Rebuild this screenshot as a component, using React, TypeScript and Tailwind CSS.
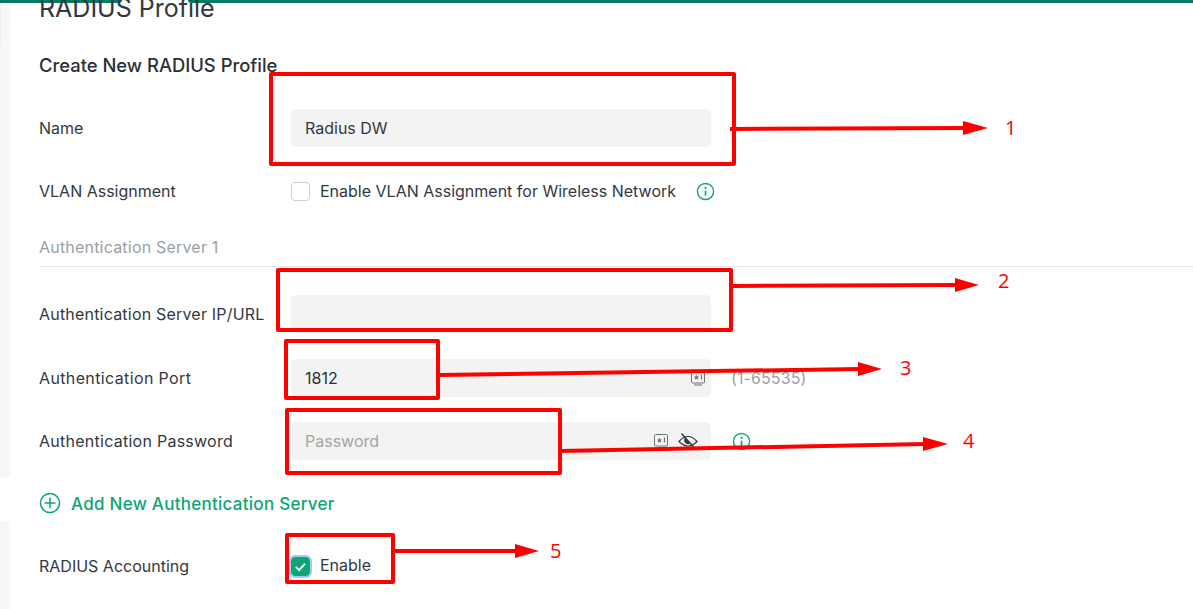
import React from 'react'

function InfoIcon({ className }: { className?: string }) {
  return (
    <svg viewBox="0 0 20 20" fill="none" stroke="currentColor" className={className}>
      <circle cx="10" cy="10" r="8.5" strokeWidth="1.5" />
      <path d="M10 9v5.5" strokeWidth="1.8" />
      <circle cx="10" cy="6.2" r="1.1" fill="currentColor" stroke="none" />
    </svg>
  )
}

function KeyboardIcon({ className }: { className?: string }) {
  return (
    <svg viewBox="0 0 16 16" fill="none" stroke="currentColor" className={className}>
      <path d="M1.500 12V2.500a1 1 0 0 1 1-1h11a1 1 0 0 1 1 1V12a1 1 0 0 1-1 1H2.500a1 1 0 0 1-1-1z" strokeWidth="1" />
      <path d="M4 15h8" strokeWidth="1" />
      <path d="M6.500 4.500l.8 1.900 2 .1-1.500 1.300.5 2-1.800-1.100-1.800 1.100.5-2L3.700 6.500l2-.1z" fill="currentColor" stroke="none" />
      <path d="M11.500 4.500v5" strokeWidth="1.200" />
    </svg>
  )
}

function EyeOffIcon({ className }: { className?: string }) {
  return (
    <svg viewBox="0 0 20 20" fill="none" stroke="currentColor" className={className}>
      <path d="M1 10.500C4 7 7 5.500 10 5.500s6 1.500 9 5c-3 3-6 4.500-9 4.500s-6-1.500-9-4.500z" strokeWidth="1.200" />
      <path d="M7 7c-.8 1-1 2-.8 3 .3 1.500 1.800 3 3.300 3.200 1 .1 2-.2 2.800-.8z" fill="currentColor" stroke="none" />
      <path d="M3.500 2.500l13 14.500" strokeWidth="1.400" />
    </svg>
  )
}

function Row({ label, labelClass, children }: { label: string; labelClass?: string; children: React.ReactNode }) {
  return (
    <div className="flex h-[38px] items-center">
      <div className={`w-[252px] shrink-0 text-[#33383f] ${labelClass ?? ''}`}>{label}</div>
      {children}
    </div>
  )
}

function Field({ children }: { children?: React.ReactNode }) {
  return <div className="flex h-[38px] w-[420px] items-center rounded-[5px] bg-[#f3f3f3] pl-[14px] pr-[13px]">{children}</div>
}

const redBoxes = [
  'left-[269px] top-[72px] h-[94px] w-[467px]',
  'left-[276px] top-[268px] h-[64px] w-[457px]',
  'left-[284px] top-[339px] h-[61px] w-[156px]',
  'left-[285px] top-[408px] h-[67px] w-[277px]',
  'left-[285px] top-[533px] h-[51px] w-[110px]',
]

const numbers = [
  { text: '1', cls: 'left-[1005px] top-[113px]' },
  { text: '2', cls: 'left-[998px] top-[266px]' },
  { text: '3', cls: 'left-[900px] top-[353px]' },
  { text: '4', cls: 'left-[963px] top-[426px]' },
  { text: '5', cls: 'left-[550px] top-[536px]' },
]

export default function App() {
  return (
    <div className="relative h-[609px] w-[1193px] overflow-hidden bg-white font-['Inter',sans-serif] text-[16px]">
      {/* top bar, with the gap of a tab sitting in it */}
      <div className="flex h-[3px]">
        <div className="w-[122px] rounded-br-[3px] bg-[#047a62]" />
        <div className="w-[66px]" />
        <div className="flex-1 rounded-bl-[3px] bg-[#047a62]" />
      </div>

      <div className="flex h-[606px]">
        {/* left edge strip */}
        <div className="flex w-[10px] shrink-0 flex-col">
          <div className="h-[474px] bg-[#f7f7f7]">
            <div className="h-[42px] w-px bg-[#ececec]" />
          </div>
          <div className="mt-[44px] flex-1 bg-[#f7f7f7]" />
        </div>

        <div className="flex-1 pl-[29px]">
          <h1 className="-mt-[10px] h-[30px] text-[25px] leading-[30px] text-[#33383f]">RADIUS Profile</h1>
          <h2 className="mt-[30px] h-[24px] text-[18.400px] leading-[24px] font-[450] text-[#2b3036]">Create New RADIUS Profile</h2>

          <div className="mt-[32px]">
            <Row label="Name">
              <Field>
                <span className="text-[#33383f]">Radius DW</span>
              </Field>
            </Row>
          </div>

          <div className="mt-[25px]">
            <Row label="VLAN Assignment">
              <div className="h-[19px] w-[19px] rounded-[4px] border border-[#cfcfcf] bg-white" />
              <span className="ml-[10px] text-[#33383f]">Enable VLAN Assignment for Wireless Network</span>
              <InfoIcon className="ml-[20px] h-[19px] w-[19px] text-[#10a874]" />
            </Row>
          </div>

          <div className="mt-[25px] h-[32px] border-b border-[#e8e8e8] leading-[24px] tracking-[0.2px] text-[#9a9fa5]">
            Authentication Server 1
          </div>

          <div className="mt-[28px]">
            <Row label="Authentication Server IP/URL" labelClass="tracking-[0.2px]">
              <Field />
            </Row>
          </div>

          <div className="mt-[26px]">
            <Row label="Authentication Port" labelClass="tracking-[0.37px]">
              <Field>
                <span className="flex-1 text-[#2b3036]">1812</span>
                <KeyboardIcon className="-mr-[8px] h-[16px] w-[16px] text-[#6f7378]" />
              </Field>
              <span className="ml-[20px] tracking-[0.1px] text-[#9a9fa5]">(1-65535)</span>
            </Row>
          </div>

          <div className="mt-[25px]">
            <Row label="Authentication Password" labelClass="tracking-[0.26px]">
              <Field>
                <span className="flex-1 text-[#a3a3a3]">Password</span>
                <KeyboardIcon className="h-[16px] w-[16px] text-[#6f7378]" />
                <EyeOffIcon className="ml-[9px] h-[20px] w-[20px] text-[#33383f]" />
              </Field>
              <InfoIcon className="ml-[21px] h-[19px] w-[19px] text-[#10a874]" />
            </Row>
          </div>

          <div className="mt-[32px] flex h-[22px] items-center text-[#0ea574]">
            <svg viewBox="0 0 22 22" fill="none" stroke="currentColor" strokeWidth="1.500" className="h-[22px] w-[22px]">
              <circle cx="11" cy="11" r="9.500" />
              <path d="M11 5.500v11M5.500 11h11" />
            </svg>
            <span className="ml-[10px] pt-[3px] text-[17px] font-medium tracking-[0.27px]">Add New Authentication Server</span>
          </div>

          <div className="mt-[33px]">
            <Row label="RADIUS Accounting">
              <div className="flex h-[19px] w-[19px] items-center justify-center rounded-[4px] bg-[#0ea574] outline-2 outline-[#9fcdf5]">
                <svg viewBox="0 0 14 14" fill="none" stroke="white" strokeWidth="2" className="h-[13px] w-[13px]">
                  <path d="M2 7.500l3.500 3.500L12 4" />
                </svg>
              </div>
              <span className="mb-[2px] ml-[10px] text-[#33383f]">Enable</span>
            </Row>
          </div>
        </div>
      </div>

      {/* screenshot annotations drawn on top */}
      {redBoxes.map((cls) => (
        <div key={cls} className={`absolute rounded-[2px] border-[4.500px] border-[#ff0000] ${cls}`} />
      ))}
      <svg viewBox="0 0 1193 609" className="pointer-events-none absolute top-0 left-0 h-[609px] w-[1193px]" stroke="#ff0000" strokeWidth="4" fill="#ff0000">
        <path d="M730 129L965 128" />
        <path d="M963 121l25 7-25 7z" stroke="none" />
        <path d="M733 286L957 285" />
        <path d="M955 278l24 7-24 7z" stroke="none" />
        <path d="M440 375L860 369" />
        <path d="M858 362l24 7-24 7z" stroke="none" />
        <path d="M560 451L925 444" />
        <path d="M923 437l25 7-25 7z" stroke="none" />
        <path d="M395 551L517 551" />
        <path d="M515 544l24 7-24 7z" stroke="none" />
      </svg>
      {numbers.map((n) => (
        <span key={n.text} className={`absolute font-['Open_Sans',sans-serif] text-[20px] leading-[30px] text-[#ff0000] ${n.cls}`}>
          {n.text}
        </span>
      ))}
    </div>
  )
}
